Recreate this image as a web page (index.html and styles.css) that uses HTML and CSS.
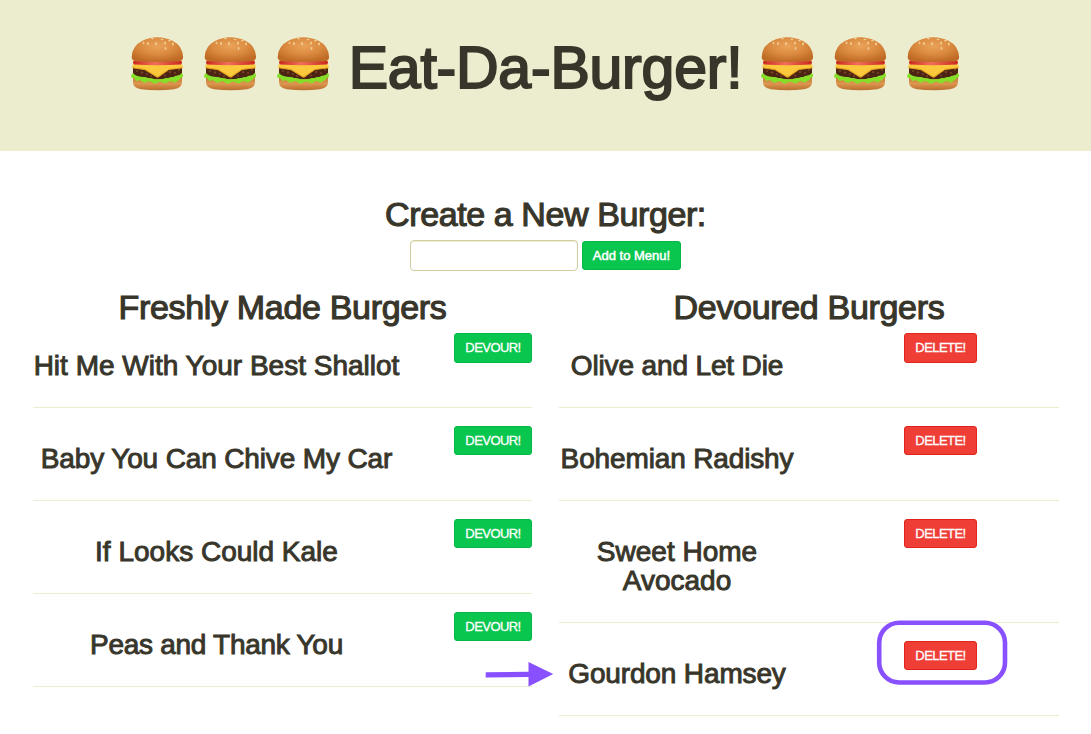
FILE: index.html
```html
<!DOCTYPE html>
<html lang="en">
<head>
<meta charset="utf-8">
<title>Eat-Da-Burger!</title>
<link rel="stylesheet" href="styles.css">
</head>
<body>
<svg class="defs" width="0" height="0" aria-hidden="true">
  <defs>
    <radialGradient id="bun" cx=".5" cy=".35" r=".65">
      <stop offset="0" stop-color="#eaa35a"/><stop offset=".5" stop-color="#dc8c41"/><stop offset="1" stop-color="#bf6a25"/>
    </radialGradient>
    <linearGradient id="base" x1="0" y1="0" x2="0" y2="1">
      <stop offset="0" stop-color="#c47a35"/><stop offset=".5" stop-color="#dd9650"/><stop offset="1" stop-color="#b96f2e"/>
    </linearGradient>
    <linearGradient id="tomato" x1="0" y1="0" x2="1" y2="0">
      <stop offset="0" stop-color="#c8281c"/><stop offset=".45" stop-color="#f0705c"/><stop offset="1" stop-color="#c8281c"/>
    </linearGradient>
    <symbol id="burger" viewBox="0 0 53 56">
      <path fill="url(#base)" d="M2 41h49v5q0 6-8 7.200q-16 2-33 0Q2 52 2 46z"/>
      <path fill="#4b2414" d="M2 30q24-4 49 0v8q-1 3-5 3.500q-20 3.500-40 0Q2 40 2 37z"/>
      <g fill="#7a4326"><circle cx="6" cy="35" r="1"/><circle cx="11" cy="36.500" r="1.200"/><circle cx="16" cy="38" r="1"/><circle cx="20" cy="40" r="1.100"/><circle cx="34" cy="39.500" r="1.100"/><circle cx="39" cy="36" r="1.200"/><circle cx="44" cy="37" r="1"/><circle cx="48" cy="34" r="1"/><circle cx="27" cy="41" r="1"/></g>
      <path fill="#86de28" d="M2 37Q-.5 39 .3 41.500q2 .5 3 .5q1 4 4 2.500q2-1 3.500 1q3 2.500 5.500 .3q3-1.500 5 1q3 2 5.500-.5q3-1.500 5.500 .5q3 2 5-1q3-1.500 5 .5q3 1 4-1.500q3-.5 3.500-3q3-.5 2-3Q52 37.500 50.500 37q-1 2-4 2.500q-3 0-4 1.500q-3-.5-5 1q-3-.5-5.500 1q-5 .5-9 0q-3-1.500-6-1q-2-1.500-5-1Q4.500 40.500 2 37z"/>
      <path fill="#fcc93c" d="M1.500 28.500q25-3 50 0v3.400L38 33.500 28 40.500q-1.500 1-3 0L14 33.500 1.500 31.800z"/>
      <path fill="#e7a01e" d="M1.500 31.300L14 33 25.500 40q1 .7 2 0L38 33l13.500-1.700v.9L38 34 28 41q-1.500 1-3 0L14 34.200 1.500 32.300z"/>
      <path fill="url(#tomato)" d="M3 24.500h47q2 2 0 4q-23 1.500-47 0Q1 26.500 3 24.500z"/>
      <path fill="url(#bun)" d="M.8 20.500Q1.200 10 11 5Q26-2.500 42 5Q51.500 10 52 20.500q.5 4-4 4.700q-22 1.600-43 0Q0 24.500 .8 20.500z"/>
      <g fill="#f0cd92"><ellipse cx="17" cy="7.500" rx="1" ry="1.500"/><ellipse cx="21.500" cy="2.600" rx="1.300" ry=".8"/><ellipse cx="25" cy="7.500" rx="1" ry="1.500"/><ellipse cx="31" cy="3.500" rx="1.400" ry=".8"/><ellipse cx="34" cy="7" rx="1" ry="1.500"/><ellipse cx="38.500" cy="4.600" rx="1.400" ry=".9"/><ellipse cx="42" cy="8" rx="1" ry="1.400"/><ellipse cx="34.500" cy="12.500" rx=".9" ry="1.400"/><ellipse cx="12.500" cy="7" rx=".9" ry="1.200"/></g>
    </symbol>
  </defs>
</svg>

<header class="banner">
  <div class="burgers"><svg><use href="#burger"/></svg><svg><use href="#burger"/></svg><svg><use href="#burger"/></svg></div>
  <h1 class="title">Eat-Da-Burger!</h1>
  <div class="burgers"><svg><use href="#burger"/></svg><svg><use href="#burger"/></svg><svg><use href="#burger"/></svg></div>
</header>

<main>
  <h2 class="heading create">Create a New Burger:</h2>
  <form class="new-burger">
    <input class="field" type="text" aria-label="Burger name">
    <button class="btn add" type="button">Add to Menu!</button>
  </form>

  <div class="columns">
    <section class="column fresh">
      <h2 class="heading">Freshly Made Burgers</h2>
      <div class="row"><h3 class="name wide">Hit Me With Your Best Shallot</h3><button class="btn devour">DEVOUR!</button></div>
      <div class="row"><h3 class="name">Baby You Can Chive My Car</h3><button class="btn devour">DEVOUR!</button></div>
      <div class="row"><h3 class="name wide">If Looks Could Kale</h3><button class="btn devour">DEVOUR!</button></div>
      <div class="row"><h3 class="name tight">Peas and Thank You</h3><button class="btn devour">DEVOUR!</button></div>
    </section>
    <section class="column devoured">
      <h2 class="heading">Devoured Burgers</h2>
      <div class="row"><h3 class="name">Olive and Let Die</h3><button class="btn delete">DELETE!</button></div>
      <div class="row"><h3 class="name">Bohemian Radishy</h3><button class="btn delete">DELETE!</button></div>
      <div class="row"><h3 class="name wide">Sweet Home<br>Avocado</h3><button class="btn delete">DELETE!</button></div>
      <div class="row"><h3 class="name">Gourdon Hamsey</h3><button class="btn delete">DELETE!</button></div>
    </section>
  </div>
</main>

<svg class="annotations" width="1091" height="734" viewBox="0 0 1091 734" aria-hidden="true">
  <path d="M485.700 672.300L528.500 671.800V662L553.200 674 528.500 686.500V677L485.700 677.600z" fill="#8850ff"/>
  <rect x="879.200" y="622.700" width="125.800" height="59.800" rx="20" fill="none" stroke="#8850ff" stroke-width="4.600"/>
</svg>
</body>
</html>
```
FILE: styles.css
```css
* { box-sizing: border-box; }

body {
  margin: 0;
  height: 734px;
  overflow: hidden;
  background: #fff;
  color: #38362b;
  font-family: "Liberation Sans", Arial, sans-serif;
}

h1, h2, h3 {
  margin: 0;
  font-weight: 400;
  white-space: nowrap;
  -webkit-text-stroke: 0.034em #38362b;
}

.defs { position: absolute; }

.banner {
  display: flex;
  justify-content: center;
  height: 151px;
  padding-top: 36px;
  background: #ecedce;
}

.burgers { display: flex; gap: 20px; }
.burgers svg { width: 53px; height: 56px; }

.title {
  width: 431px;
  font-size: 59px;
  line-height: 65px;
  letter-spacing: -0.22px;
  text-align: center;
}

.heading {
  font-size: 34px;
  line-height: 40px;
  letter-spacing: -0.32px;
  text-align: center;
}

.create { margin-top: 43px; letter-spacing: -0.4px; }

.new-burger {
  display: flex;
  justify-content: center;
  gap: 4px;
  margin-top: 6px;
}

.field {
  width: 168px;
  height: 31px;
  border: 1px solid #d2cda0;
  border-radius: 4px;
  box-shadow: inset 0 1px 1px #ecedce;
}

.btn {
  height: 29px;
  padding: 0;
  border: 1px solid;
  border-radius: 3px;
  color: #fff;
  font: 13px/27px "Liberation Sans", Arial, sans-serif;
  letter-spacing: -0.55px;
  white-space: nowrap;
  -webkit-text-stroke: 0.3px #fff;
}

.add, .devour { background: #08c64e; border-color: #04b846; }
.add { width: 99px; margin-top: 1px; letter-spacing: 0; -webkit-text-stroke-width: 0.5px; }
.devour { width: 78px; }
.delete { width: 73px; background: #ee3e36; border-color: #e2231d; }

.columns {
  display: grid;
  grid-template-columns: 499px 500px;
  gap: 27px;
  margin: 16px 0 0 33px;
}

.column .heading { margin-bottom: 6px; }

.row {
  display: grid;
  align-items: start;
  margin-bottom: 18px;
  border-bottom: 1px solid #ecedce;
}

.fresh .row { grid-template-columns: 367px 78px; justify-content: space-between; }
.devoured .row { grid-template-columns: 236px 73px; column-gap: 109px; }
.heading + .row .btn { height: 30px; padding-bottom: 1px; }

.name {
  padding: 18px 0 27px;
  font-size: 28px;
  line-height: 29px;
  letter-spacing: -0.14px;
  text-align: center;
}

.name.wide { letter-spacing: 0; }
.name.tight { letter-spacing: -0.28px; }

.annotations { position: absolute; top: 0; left: 0; pointer-events: none; }
```
